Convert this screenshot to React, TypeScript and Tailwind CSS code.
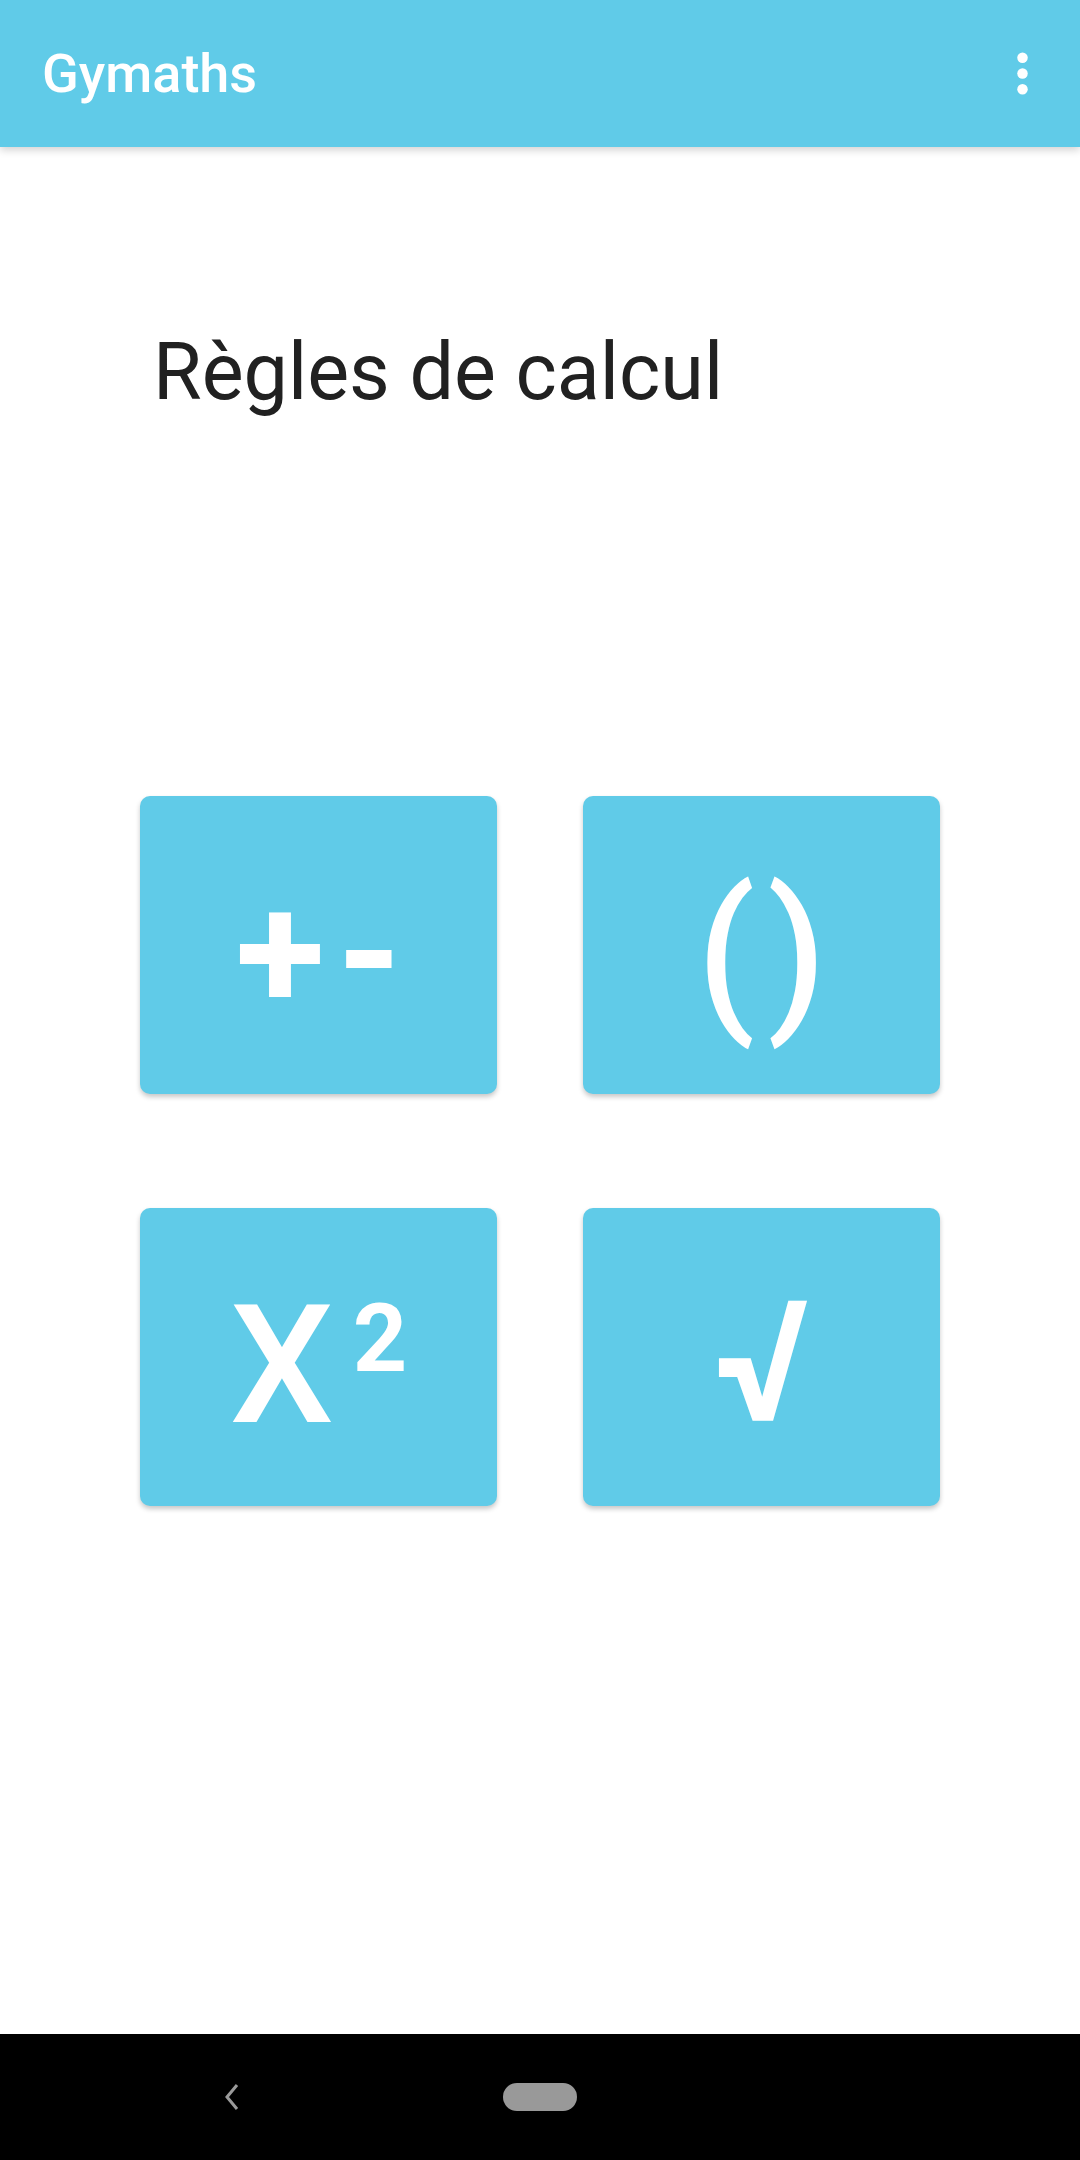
import React from "react";

const roboto = { fontFamily: "Roboto, 'Noto Sans', sans-serif" };

function MoreIcon() {
  return (
    <svg width="63" height="63" viewBox="0 0 24 24" fill="#ffffff">
      <circle cx="12" cy="6" r="2" />
      <circle cx="12" cy="12" r="2" />
      <circle cx="12" cy="18" r="2" />
    </svg>
  );
}

function Tile({ children }: { children: React.ReactNode }) {
  return (
    <button className="w-[357px] h-[298px] pt-[16px] rounded-[10px] bg-[#60cbe8] shadow-[0_3px_5px_rgba(0,0,0,0.22)] flex items-center justify-center text-white">
      {children}
    </button>
  );
}

export default function App() {
  return (
    <div className="w-[1080px] h-[2160px] flex flex-col bg-white" style={roboto}>
      {/* App bar */}
      <header className="relative z-10 h-[147px] shrink-0 bg-[#60cbe8] shadow-[0_3px_8px_rgba(0,0,0,0.18)] flex items-center justify-between pl-[42px] pr-[26px]">
        <h1 className="text-[54px] font-medium text-white leading-none">Gymaths</h1>
        <MoreIcon />
      </header>

      {/* Content */}
      <main className="flex-1 flex flex-col">
        <h2 className="mt-[179px] pl-[153px] text-[79px] leading-[93px] font-normal text-[#212121]">
          Règles de calcul
        </h2>

        <div className="mt-[377px] grid grid-cols-[357px_357px] gap-x-[86px] gap-y-[114px] justify-center">
          <Tile>
            <span className="text-[164px] font-bold leading-none flex items-center">
              <span>+</span>
              <span className="ml-[12px]">-</span>
            </span>
          </Tile>
          <Tile>
            <span className="text-[169px] font-medium leading-none flex">
              <span>(</span>
              <span className="ml-[12px]">)</span>
            </span>
          </Tile>
          <Tile>
            <span className="flex items-start">
              <span className="text-[165px] font-medium leading-none">X</span>
              <span className="ml-[19px] mt-[8px] text-[95px] font-bold leading-none">2</span>
            </span>
          </Tile>
          <Tile>
            <span className="-mt-[4px] text-[169px] font-bold leading-none">√</span>
          </Tile>
        </div>
      </main>

      {/* System navigation bar */}
      <nav className="h-[126px] shrink-0 bg-black flex items-center pl-[222px]">
        <svg width="18" height="28" viewBox="0 0 18 28" fill="none">
          <path d="M15 2 L5 14 L15 26" stroke="#9a9a9a" strokeWidth="3" />
        </svg>
        <div className="ml-[263px] w-[74px] h-[28px] rounded-full bg-[#999999]" />
      </nav>
    </div>
  );
}
